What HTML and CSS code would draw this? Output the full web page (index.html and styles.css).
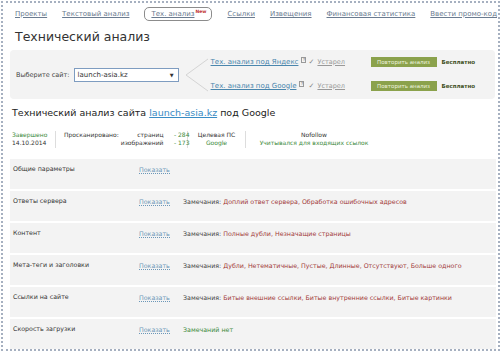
FILE: index.html
```html
<!DOCTYPE html>
<html lang="ru">
<head>
  <meta charset="UTF-8" />
  <title>Технический анализ</title>
  <link rel="stylesheet" href="styles.css">
</head>
<body>
  <div class="frame">
    <nav class="nav">
      <a href="#">Проекты</a>
      <a href="#">Текстовый анализ</a>
      <a href="#" class="active">Тех. анализ<sup>New</sup></a>
      <a href="#">Ссылки</a>
      <a href="#">Извещения</a>
      <a href="#">Финансовая статистика</a>
      <a href="#">Ввести промо-код</a>
    </nav>

    <h1 class="page-title">Технический анализ</h1>

    <!-- site picker -->
    <div class="site-panel">
      <div class="site-pick">
        <span>Выберите сайт:</span>
        <div class="select">launch-asia.kz<span class="arrow">▼</span></div>
      </div>
      <svg class="bracket" width="24" height="34" viewBox="0 0 24 34">
        <polyline points="23,1 1,17 23,33" fill="none" stroke="#d4d4d4" stroke-width="1"/>
      </svg>
      <div class="engines">
        <div class="engine-row">
          <div class="engine-link"><a href="#">Тех. анализ под Яндекс</a><span class="help">?</span></div>
          <div class="status"><span class="check">✓</span><a href="#">Устарел</a></div>
          <button class="repeat">Повторить анализ</button>
          <span class="free">Бесплатно</span>
        </div>
        <div class="engine-row">
          <div class="engine-link"><a href="#">Тех. анализ под Google</a><span class="help">?</span></div>
          <div class="status"><span class="check">✓</span><a href="#">Устарел</a></div>
          <button class="repeat">Повторить анализ</button>
          <span class="free">Бесплатно</span>
        </div>
      </div>
    </div>

    <h2 class="report-title">Технический анализ сайта <a href="#">launch-asia.kz</a> под Google</h2>

    <div class="stats">
      <div class="stat stat-done">
        <span class="green">Завершено</span>
        <span>14.10.2014</span>
      </div>
      <div class="stat stat-scan">
        <div class="scan-label">Просканировано:</div>
        <div class="scan-list">
          <div><span>страниц</span><span class="green num">- 284</span></div>
          <div><span>изображений</span><span class="green num">- 173</span></div>
        </div>
      </div>
      <div class="stat stat-center">
        <span>Целевая ПС</span>
        <span class="green">Google</span>
      </div>
      <div class="stat stat-center stat-last">
        <span>Nofollow</span>
        <span class="green">Учитывался для входящих ссылок</span>
      </div>
    </div>

    <div class="checks">
      <div class="check-row">
        <div class="check-name">Общие параметры</div>
        <div class="check-show"><a href="#">Показать</a></div>
        <div class="check-notes"></div>
      </div>
      <div class="check-row">
        <div class="check-name">Ответы сервера</div>
        <div class="check-show"><a href="#">Показать</a></div>
        <div class="check-notes">Замечания: <span class="bad">Доплий ответ сервера, Обработка ошибочных адресов</span></div>
      </div>
      <div class="check-row">
        <div class="check-name">Контент</div>
        <div class="check-show"><a href="#">Показать</a></div>
        <div class="check-notes">Замечания: <span class="bad">Полные дубли, Незначащие страницы</span></div>
      </div>
      <div class="check-row">
        <div class="check-name">Мета-теги и заголовки</div>
        <div class="check-show"><a href="#">Показать</a></div>
        <div class="check-notes">Замечания: <span class="bad">Дубли, Нетематичные, Пустые, Длинные, Отсутствуют, Больше одного</span></div>
      </div>
      <div class="check-row">
        <div class="check-name">Ссылки на сайте</div>
        <div class="check-show"><a href="#">Показать</a></div>
        <div class="check-notes">Замечания: <span class="bad">Битые внешние ссылки, Битые внутренние ссылки, Битые картинки</span></div>
      </div>
      <div class="check-row">
        <div class="check-name">Скорость загрузки</div>
        <div class="check-show"><a href="#">Показать</a></div>
        <div class="check-notes"><span class="good">Замечаний нет</span></div>
      </div>
    </div>
  </div>
</body>
</html>
```

FILE: styles.css
```css
* { margin: 0; padding: 0; box-sizing: border-box; }

body {
  font-family: "DejaVu Sans", Verdana, sans-serif;
  font-size: 6.5px;
  color: #333;
  background: #fff;
}

.frame {
  margin: 1px 2px 0 1px;
  height: 350px;
  border: 2px dotted #a6b0c0;
  padding: 0 1px 0 7px;
  overflow: hidden;
}

/* top nav */
.nav {
  display: flex;
  justify-content: space-between;
  align-items: center;
  height: 20px;
  padding: 1px 0 0 5px;
  font-size: 7px;
}

.nav a { color: #6a7b90; text-decoration: underline; }

.nav .active {
  border: 1px solid #8c8c8c;
  border-radius: 5px;
  padding: 2px 17px 2px 6px;
  position: relative;
}

.nav .active sup {
  position: absolute;
  top: 1px;
  right: 5px;
  font-size: 4.5px;
  font-weight: bold;
  color: #c03030;
}

.page-title {
  font-size: 12.5px;
  font-weight: normal;
  color: #333;
  padding: 6px 0 0 5px;
  height: 27px;
}

/* site picker */
.site-panel {
  display: flex;
  align-items: center;
  background: #f3f3f3;
  border-radius: 4px;
  height: 49px;
  margin: 0 2px 0 0;
  padding-left: 6px;
}

.site-pick { display: flex; align-items: center; gap: 4px; color: #444; }

.select {
  display: flex;
  justify-content: space-between;
  align-items: center;
  width: 105px;
  height: 14px;
  background: #fff;
  border: 1px solid #7e9cc0;
  padding: 0 4px 0 3px;
  font-size: 7px;
  color: #333;
}

.select .arrow { font-size: 5px; }

.bracket { margin: 0 2px 0 6px; }

.engines { display: flex; flex-direction: column; gap: 14px; padding-bottom: 2px; }

.engine-row { display: flex; align-items: center; }

.engine-link { width: 98px; display: flex; align-items: center; }
.engine-link a { color: #4a86ad; font-size: 7px; }

.help {
  display: inline-block;
  width: 5px;
  height: 6px;
  margin-left: 3px;
  border: 1px solid #999;
  font-size: 4px;
  line-height: 4px;
  text-align: center;
  color: #666;
  position: relative;
  top: -2px;
}

.status { width: 62px; color: #999; }
.status a { color: #999; }
.check { color: #888; margin-right: 3px; font-size: 7px; }

.repeat {
  width: 66px;
  height: 10px;
  border: none;
  background: #8ba24c;
  color: #eef4df;
  font-family: inherit;
  font-size: 5.5px;
}

.free { margin-left: 5px; font-size: 5.5px; font-weight: bold; color: #3f4f1c; }

/* report */
.report-title {
  font-size: 9.5px;
  font-weight: normal;
  color: #222;
  padding: 8px 0 0 2px;
  height: 27px;
}

.report-title a { color: #3a8cc4; }

.stats {
  display: flex;
  height: 33px;
  padding: 5px 0 0 2px;
  font-size: 6px;
}

.stat {
  display: flex;
  flex-direction: column;
  gap: 1px;
  border-right: 1px solid #ddd;
  height: 17px;
  padding-right: 8px;
}

.green { color: #3c8a3c; }

.stat-done { width: 44px; }

.stat-scan { flex-direction: row; padding-left: 8px; width: 132px; gap: 2px; }
.scan-list { display: flex; flex-direction: column; gap: 1px; }
.scan-list div { display: flex; justify-content: flex-end; }
.scan-list .num { width: 26px; text-align: right; }

.stat-center { align-items: center; width: 58px; padding: 0; }
.stat-last { border-right: none; width: 136px; }

/* check list */
.checks { display: flex; flex-direction: column; gap: 2.6px; margin-right: 1px; }

.check-row {
  display: flex;
  background: #f3f3f3;
  height: 29.5px;
  padding: 6px 0 0 3px;
  font-size: 6.3px;
}

.check-name { width: 126px; color: #333; }

.check-show { width: 44px; padding-top: 1px; }
.check-show a {
  color: #6b97b8;
  text-decoration: none;
  border-bottom: 1px dotted #6b97b8;
}

.check-notes { color: #444; padding-top: 1px; }
.bad { color: #a23a3a; }
.good { color: #3c8a3c; }
```
